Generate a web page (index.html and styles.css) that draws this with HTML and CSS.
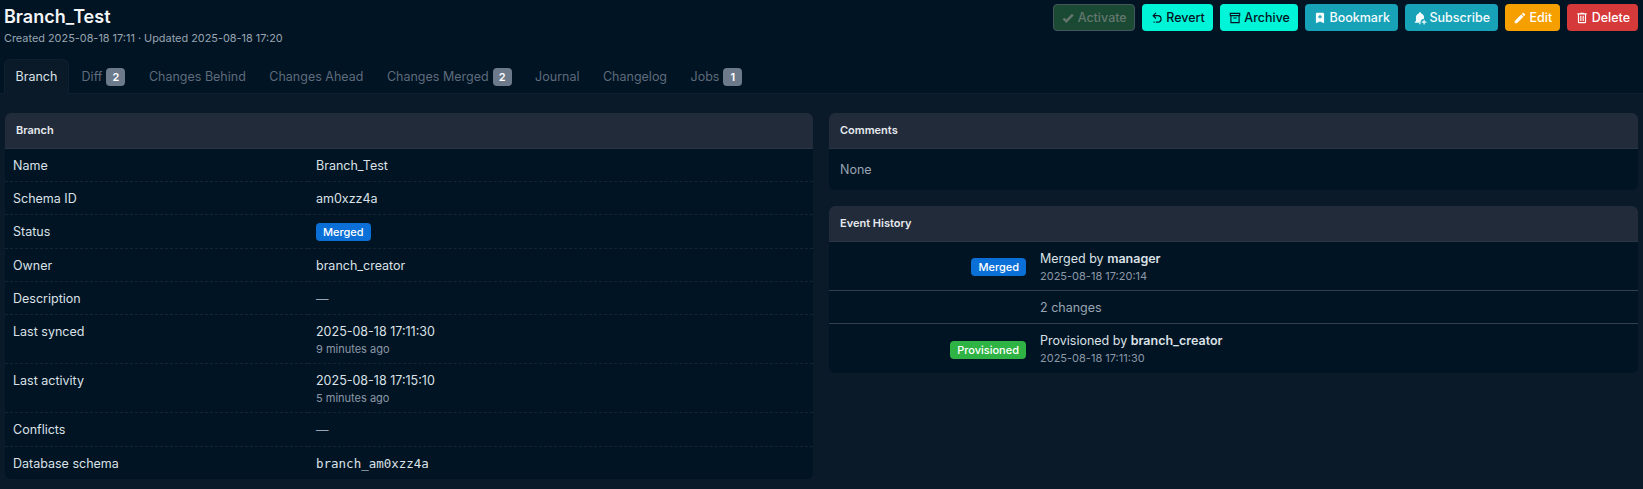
FILE: index.html
```html
<!DOCTYPE html>
<html lang="en">
<head>
  <meta charset="UTF-8">
  <meta name="viewport" content="width=device-width, initial-scale=1.0">
  <title>Branch_Test</title>
  <link rel="stylesheet" href="styles.css">
</head>
<body>
  <header class="top">
    <div class="title-row">
      <div>
        <h1>Branch_Test</h1>
        <div class="subtitle">Created 2025-08-18 17:11 · Updated 2025-08-18 17:20</div>
      </div>
      <div class="actions">
        <button class="btn btn-activate" disabled><svg viewBox="0 0 24 24"><path d="M9,20.42L2.79,14.21L5.62,11.38L9,14.77L18.88,4.88L21.71,7.71L9,20.42Z"/></svg>Activate</button>
        <button class="btn btn-teal"><svg viewBox="0 0 24 24"><path d="M13.5,7A6.5,6.5 0 0,1 20,13.5A6.5,6.5 0 0,1 13.5,20H10V18H13.5C16,18 18,16 18,13.5C18,11 16,9 13.5,9H7.83L10.91,12.09L9.5,13.5L4,8L9.5,2.5L10.92,3.91L7.83,7H13.5M6,18H8V20H6V18Z"/></svg>Revert</button>
        <button class="btn btn-teal"><svg viewBox="0 0 24 24"><path fill-rule="evenodd" d="M3 3H21V9H20V21H4V9H3V3M5 5V7H19V5H5M6 9V19H18V9H6M9 11H15V13H9V11Z"/></svg>Archive</button>
        <button class="btn btn-info"><svg viewBox="0 0 24 24"><path fill-rule="evenodd" d="M17,3A2,2 0 0,1 19,5V21L12,18L5,21V5C5,3.89 5.9,3 7,3H17M11,7V9H9V11H11V13H13V11H15V9H13V7H11Z"/></svg>Bookmark</button>
        <button class="btn btn-info"><svg viewBox="0 0 24 24"><path d="M10 21H13C13.2 22 12.8 23 12 23C10.9 23 10 22.1 10 21M3 20V19L5 17V11C5 7.9 7 5.2 10 4.3V4C10 2.9 10.9 2 12 2S14 2.9 14 4V4.3C17 5.2 19 7.9 19 11V13.2C15.5 13.2 13 16 13 20H3ZM18 15H20V18H23V20H20V23H18V20H15V18H18V15Z"/></svg>Subscribe</button>
        <button class="btn btn-warning"><svg viewBox="0 0 24 24"><path d="M20.71,7.04C21.1,6.65 21.1,6 20.71,5.63L18.37,3.29C18,2.9 17.35,2.9 16.96,3.29L15.12,5.12L18.87,8.87M3,17.25V21H6.75L17.81,9.93L14.06,6.18L3,17.25Z"/></svg>Edit</button>
        <button class="btn btn-danger"><svg viewBox="0 0 24 24"><path d="M9,3V4H4V6H5V19A2,2 0 0,0 7,21H17A2,2 0 0,0 19,19V6H20V4H15V3H9M7,6H17V19H7V6M9,8V17H11V8H9M13,8V17H15V8H13Z"/></svg>Delete</button>
      </div>
    </div>
    <nav class="tabs">
      <a class="tab active">Branch</a>
      <a class="tab">Diff<span class="count">2</span></a>
      <a class="tab">Changes Behind</a>
      <a class="tab">Changes Ahead</a>
      <a class="tab">Changes Merged<span class="count">2</span></a>
      <a class="tab">Journal</a>
      <a class="tab">Changelog</a>
      <a class="tab">Jobs<span class="count">1</span></a>
    </nav>
  </header>

  <main class="content">
    <section class="card">
      <div class="card-header">Branch</div>
      <table class="attrs">
        <tr><th>Name</th><td>Branch_Test</td></tr>
        <tr><th>Schema ID</th><td>am0xzz4a</td></tr>
        <tr class="tall"><th>Status</th><td><span class="badge badge-blue">Merged</span></td></tr>
        <tr><th>Owner</th><td>branch_creator</td></tr>
        <tr><th>Description</th><td class="muted">—</td></tr>
        <tr><th>Last synced</th><td>2025-08-18 17:11:30<div class="small">9 minutes ago</div></td></tr>
        <tr><th>Last activity</th><td>2025-08-18 17:15:10<div class="small">5 minutes ago</div></td></tr>
        <tr class="tall"><th>Conflicts</th><td class="muted">—</td></tr>
        <tr><th>Database schema</th><td><span class="mono">branch_am0xzz4a</span></td></tr>
      </table>
    </section>

    <div class="side">
      <section class="card">
        <div class="card-header">Comments</div>
        <div class="card-body muted-text">None</div>
      </section>
      <section class="card">
        <div class="card-header">Event History</div>
        <div class="event">
          <div class="event-badge"><span class="badge badge-blue">Merged</span></div>
          <div>Merged by <strong>manager</strong><div class="small">2025-08-18 17:20:14</div></div>
        </div>
        <div class="event event-note">
          <div class="event-badge"></div>
          <div class="muted-text">2 changes</div>
        </div>
        <div class="event">
          <div class="event-badge"><span class="badge badge-green">Provisioned</span></div>
          <div>Provisioned by <strong>branch_creator</strong><div class="small">2025-08-18 17:11:30</div></div>
        </div>
      </section>
    </div>
  </main>
</body>
</html>
```
FILE: styles.css
```css
* {
  box-sizing: border-box;
}
html, body {
  height: 100%;
}
body {
  margin: 0;
  background-color: #0a1a28;
  color: #dce1e7;
  font-family: Inter, "Liberation Sans", sans-serif;
  font-size: 12.5px;
  line-height: 20px;
  overflow: hidden;
}
.top {
  background-color: #001423;
  border-bottom: 1px solid #0f2030;
  height: 94px;
  padding: 4px 5px 0 4px;
}
.title-row {
  display: flex;
  justify-content: space-between;
  height: 55px;
}
h1 {
  margin: 0;
  font-size: 18px;
  line-height: 26px;
  font-weight: 600;
  color: #f3f5f7;
}
.subtitle {
  font-size: 10.9px;
  line-height: 16px;
  color: #9aa4b2;
}
.actions {
  display: flex;
  gap: 7px;
  align-items: flex-start;
}
.btn {
  display: flex;
  align-items: center;
  justify-content: center;
  gap: 2.5px;
  height: 27px;
  padding: 0 7px;
  border: 1px solid transparent;
  border-radius: 4px;
  font-family: inherit;
  font-size: 12.5px;
  font-weight: 500;
  cursor: pointer;
}
.btn svg {
  width: 14px;
  height: 14px;
  fill: currentColor;
}
.btn-activate {
  background-color: #1a4a33;
  border-color: #45565f;
  color: #64766f;
}
.btn-teal {
  background-color: #00f5d8;
  color: #001423;
}
.btn-info {
  background-color: #17a2b8;
  color: #f4fbfc;
}
.btn-warning {
  background-color: #f59f00;
  color: #fff;
}
.btn-danger {
  background-color: #d63939;
  color: #fff;
}
.tabs {
  display: flex;
  height: 35px;
}
.tab {
  display: flex;
  align-items: center;
  gap: 4px;
  padding: 0 11.75px;
  color: #5f6b7c;
}
.tab.active {
  background-color: #0a1a28;
  border: 1px solid #0f2030;
  border-bottom: none;
  border-radius: 6px 6px 0 0;
  margin-right: 1px;
  padding: 0 10.5px;
  color: #dce1e7;
}
.count {
  display: inline-block;
  min-width: 19px;
  height: 18px;
  padding: 0 5px;
  border-radius: 4px;
  background-color: #6c7a8b;
  color: #fff;
  font-size: 11px;
  font-weight: 600;
  line-height: 18px;
  text-align: center;
}
.content {
  display: grid;
  grid-template-columns: 808px 809px;
  gap: 16px;
  align-items: start;
  padding: 19px 5px 0 5px;
}
.side {
  display: flex;
  flex-direction: column;
  gap: 16px;
}
.card {
  background-color: #001423;
  border-radius: 6px;
  overflow: hidden;
}
.card-header {
  height: 36px;
  padding: 0 11px;
  background-color: #212b3a;
  border-bottom: 1px solid #2a3646;
  color: #e6e9ee;
  font-size: 11px;
  font-weight: 600;
  line-height: 34px;
}
.card-body {
  padding: 11px 11px;
  height: 41px;
}
.attrs {
  width: 100%;
  border-collapse: separate;
  border-spacing: 0;
}
.attrs th, .attrs td {
  padding: 7px 8px 5px;
  border-bottom: 1px dashed #162534;
  text-align: left;
  vertical-align: top;
  font-weight: 400;
}
.attrs .tall th, .attrs .tall td {
  padding-bottom: 6px;
}
.attrs tr:last-child th, .attrs tr:last-child td {
  border-bottom: none;
}
.attrs th {
  width: 303px;
}
.muted {
  color: #9aa4b2;
}
.muted-text {
  color: #9aa4b2;
}
.small {
  margin: -1px 0 1px;
  font-size: 11px;
  line-height: 16px;
  color: #8d98a7;
}
.mono {
  font-family: "DejaVu Sans Mono", monospace;
  font-size: 12.5px;
}
.badge {
  display: inline-block;
  height: 18px;
  padding: 0 7px;
  border-radius: 4px;
  color: #fff;
  font-size: 11px;
  font-weight: 500;
  line-height: 18px;
}
.badge-blue {
  background-color: #0a6fd6;
}
.badge-green {
  background-color: #2fb344;
}
.event {
  display: grid;
  grid-template-columns: 197px 1fr;
  column-gap: 14px;
  padding: 7px 0 5px;
  border-bottom: 1px solid #333f4f;
  height: 49px;
}
.event:last-child {
  border-bottom: none;
}
.event-note {
  height: 33px;
}
.event-badge {
  display: flex;
  justify-content: flex-end;
  align-items: center;
}
strong {
  font-weight: 600;
}
```
